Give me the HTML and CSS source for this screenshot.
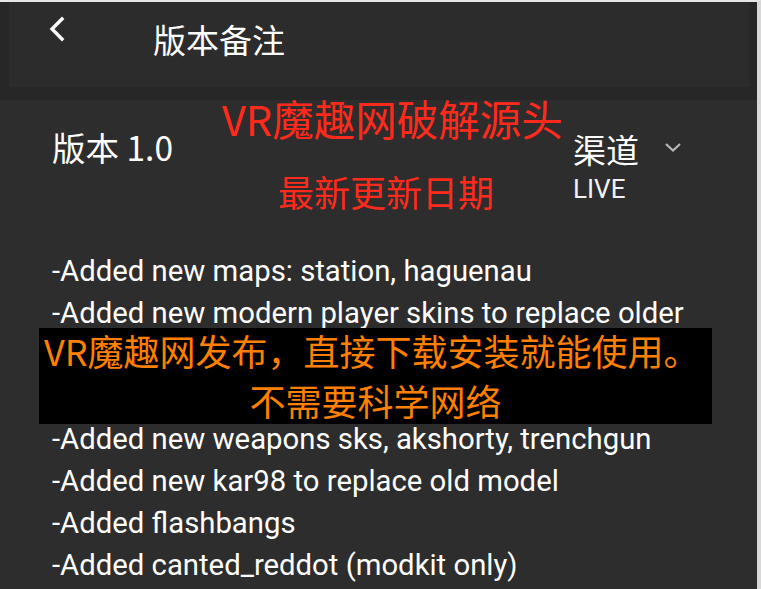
FILE: index.html
```html
<!DOCTYPE html>
<html>
<head>
<meta charset="utf-8">
<link rel="stylesheet" href="styles.css">
</head>
<body>
<div class="page">
  <div class="topbar-wrap">
    <div class="topbar">
      <svg class="back" width="20" height="26" viewBox="0 0 20 26"><path d="M15 3 L5 13 L15 23" fill="none" stroke="#fff" stroke-width="3.4" stroke-linecap="square"/></svg>
      <div class="title">版本备注</div>
    </div>
  </div>
  <div class="content">
    <div class="version-row">
      <div class="version">版本 1.0</div>
      <div class="channel">
        <div class="channel-top">
          <span class="channel-label">渠道</span>
          <svg class="chev" width="18" height="12" viewBox="0 0 18 12"><path d="M2 3 L9 9.5 L16 3" fill="none" stroke="#b8b8b8" stroke-width="2.2"/></svg>
        </div>
        <div class="live">LIVE</div>
      </div>
    </div>
    <ul class="notes">
      <li>-Added new maps: station, haguenau</li>
      <li>-Added new modern player skins to replace older</li>
      <li>-Added new player models and animations</li>
      <li>-Added new grenades and smoke effects</li>
      <li>-Added new weapons sks, akshorty, trenchgun</li>
      <li>-Added new kar98 to replace old model</li>
      <li>-Added flashbangs</li>
      <li>-Added canted_reddot (modkit only)</li>
    </ul>
  </div>
  <div class="wm1">VR魔趣网破解源头</div>
  <div class="wm2">最新更新日期</div>
  <div class="wm-box">
    <div class="box1">VR魔趣网发布，直接下载安装就能使用。</div>
    <div class="box2">不需要科学网络</div>
  </div>
</div>
</body>
</html>
```
FILE: styles.css
```css
html, body {
  margin: 0;
  padding: 0;
}
body {
  background: #2d2d2d;
  width: 761px;
  height: 589px;
  overflow: hidden;
  font-family: Roboto, "Noto Sans CJK SC", sans-serif;
  color: #fff;
}
.page {
  position: relative;
  width: 757px;
  height: 587px;
  border-top: 2px solid #e6e6e6;
  border-right: 4px solid #d8d8d8;
  background: #2d2d2d;
}
.topbar-wrap {
  background: #272727;
  padding: 0 8px 13px 9px;
}
.topbar {
  height: 85px;
  background: #2c2c2c;
  display: flex;
  align-items: flex-start;
}
.back {
  margin: 14px 0 0 38px;
}
.title {
  margin: 17px 0 0 86px;
  font-family: "Noto Sans CJK SC", sans-serif;
  font-size: 33px;
  line-height: 40px;
}
.content {
  padding-left: 52px;
}
.version-row {
  display: flex;
  justify-content: space-between;
  padding-top: 26px;
  height: 150px;
  box-sizing: border-box;
}
.version {
  font-family: "Noto Sans CJK SC", sans-serif;
  font-size: 33.5px;
  line-height: 42px;
}
.channel {
  width: 184px;
}
.channel-top {
  display: flex;
  align-items: center;
  height: 42px;
  margin-top: 2px;
}
.channel-label {
  font-family: "Noto Sans CJK SC", sans-serif;
  font-size: 33px;
  line-height: 42px;
}
.chev {
  margin-left: 25px;
  margin-top: -4px;
}
.live {
  font-size: 26px;
  line-height: 30px;
  margin-top: 4px;
  color: #f2f2f2;
}
.notes {
  list-style: none;
  margin: 0;
  padding: 0;
}
.notes li {
  font-size: 29.3px;
  line-height: 42px;
  color: #fff;
  white-space: nowrap;
}
.wm1, .wm2 {
  position: absolute;
  color: #ff2a1c;
  font-family: "Noto Sans CJK SC", sans-serif;
  white-space: nowrap;
}
.wm1 {
  left: 222px;
  top: 91px;
  font-size: 41.5px;
  line-height: 50px;
}
.wm2 {
  left: 278px;
  top: 167px;
  font-size: 36px;
  line-height: 44px;
}
.wm-box {
  position: absolute;
  left: 39px;
  top: 326px;
  width: 673px;
  height: 96px;
  background: #000;
  color: #ff8000;
  font-family: "Noto Sans CJK SC", sans-serif;
  text-align: center;
}
.box1 {
  font-size: 36px;
  line-height: 44px;
  margin-top: 0;
  text-align: left;
  padding-left: 5px;
  white-space: nowrap;
}
.box2 {
  font-size: 36px;
  line-height: 44px;
  margin-top: 6px;
}
```
